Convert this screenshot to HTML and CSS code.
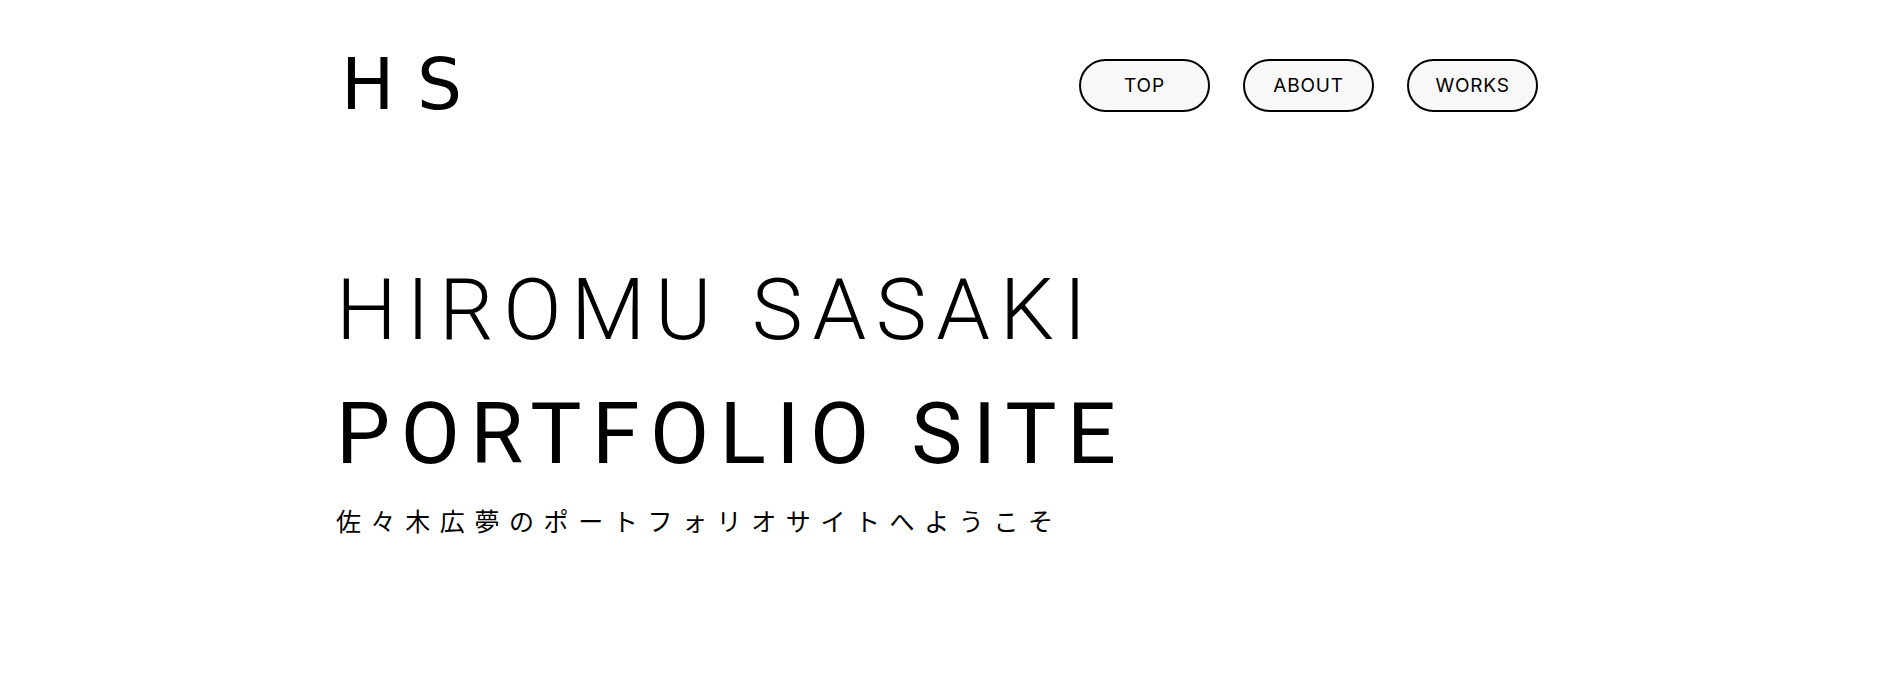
FILE: index.html
```html
<!DOCTYPE html>
<html lang="ja">
<head>
<meta charset="utf-8">
<title>HIROMU SASAKI PORTFOLIO SITE</title>
<link rel="stylesheet" href="styles.css">
</head>
<body>
<div class="wrap">
  <header class="header">
    <div class="logo">H S</div>
    <nav class="nav">
      <a class="nav-btn" href="#">TOP</a>
      <a class="nav-btn" href="#">ABOUT</a>
      <a class="nav-btn" href="#">WORKS</a>
    </nav>
  </header>
  <main class="hero">
    <h1 class="title">
      <span class="title-line light">HIROMU SASAKI</span>
      <span class="title-line bold">PORTFOLIO SITE</span>
    </h1>
    <p class="lead">佐々木広夢のポートフォリオサイトへようこそ</p>
  </main>
</div>
</body>
</html>
```
FILE: styles.css
```css
html, body {
  margin: 0;
  padding: 0;
  background: #ffffff;
  color: #000000;
}

.wrap {
  width: 1202px;
  margin-left: 336px;
}

.header {
  display: flex;
  justify-content: space-between;
  align-items: center;
  padding-top: 44px;
}

.logo {
  font-family: "DejaVu Sans", sans-serif;
  font-size: 71px;
  line-height: 82px;
  letter-spacing: 0;
  padding-left: 5px;
}

.nav {
  display: flex;
  gap: 33px;
}

.nav-btn {
  display: flex;
  align-items: center;
  justify-content: center;
  box-sizing: border-box;
  width: 131px;
  height: 53px;
  border: 2px solid #000;
  border-radius: 27px;
  background: #f8f8f8;
  color: #000;
  text-decoration: none;
  font-family: "Inter", "Lato", sans-serif;
  font-size: 19px;
  letter-spacing: 0.8px;
}

.hero {
  padding-top: 122px;
}

.title {
  margin: 0;
  font-family: "Roboto", "Liberation Sans", sans-serif;
  font-size: 86px;
  font-weight: 400;
  line-height: 124px;
}

.title-line {
  display: block;
}

.title-line.light {
  font-weight: 300;
  letter-spacing: 9.6px;
}

.title-line.bold {
  font-weight: 400;
  letter-spacing: 10.4px;
}

.lead {
  margin: 4px 0 0;
  font-family: "Noto Sans CJK JP", sans-serif;
  font-size: 25px;
  letter-spacing: 9.6px;
  line-height: 40px;
}
```
